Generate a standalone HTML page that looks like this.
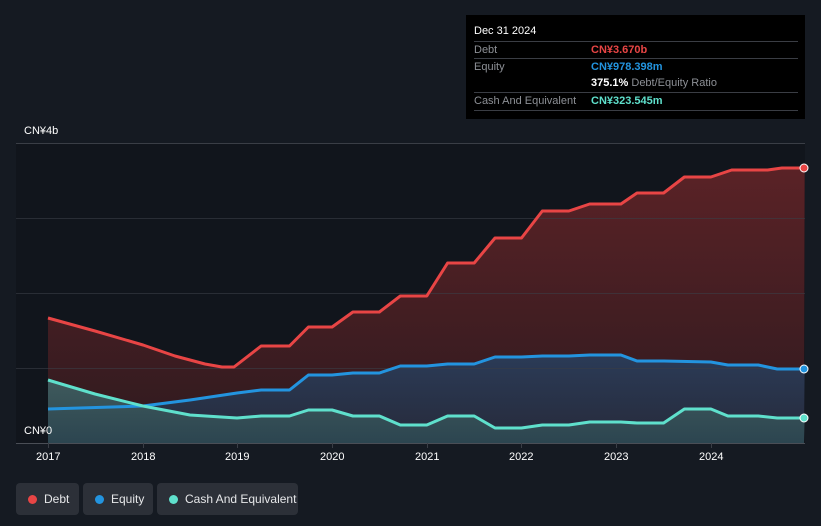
<!DOCTYPE html>
<html><head><meta charset="utf-8"><style>
html,body{margin:0;padding:0;background:#151a22;width:821px;height:526px;overflow:hidden;font-family:"Liberation Sans",sans-serif}
.tt{position:absolute;left:466px;top:15px;width:339px;height:104px;background:#000;color:#fff;font-size:11px}
.tt .h{position:absolute;left:8px;top:10px;font-size:11px}
.row{position:absolute;left:8px;width:324px;border-top:1px solid #3a3d44;height:17px;line-height:17px}
.row .l{position:absolute;left:0;color:#8d9096}
.row .v{position:absolute;left:117px;font-weight:bold}
.leg{position:absolute;top:483px;height:32px;background:#2c3038;border-radius:4px;color:#e6e7e9;font-size:12px;line-height:32px}
.leg i{position:absolute;top:12px;left:12px;width:9px;height:9px;border-radius:50%}
.leg span{position:absolute;left:28px}
.ax{position:absolute;color:#fff;font-size:11px}
</style></head><body>
<svg width="821" height="526" style="position:absolute;left:0;top:0">
<defs>
<linearGradient id="gd" x1="0" y1="0" x2="0" y2="1"><stop offset="0" stop-color="#5a2226"/><stop offset="1" stop-color="#2e1a1f"/></linearGradient>
<linearGradient id="ge" x1="0" y1="0" x2="0" y2="1"><stop offset="0" stop-color="#2b3b57"/><stop offset="1" stop-color="#262a3a"/></linearGradient>
<linearGradient id="gc" x1="0" y1="0" x2="0" y2="1"><stop offset="0" stop-color="#3f5a5c"/><stop offset="1" stop-color="#2c4550"/></linearGradient>
</defs>
<rect x="16" y="143" width="789" height="300" fill="#11151c"/>
<g id="areas"></g>
<g stroke="#3a3e46" stroke-width="1">
<line x1="16" y1="143.5" x2="805" y2="143.5"/><line x1="16" y1="218.5" x2="805" y2="218.5" stroke-opacity=".6"/><line x1="16" y1="293.5" x2="805" y2="293.5" stroke-opacity=".6"/><line x1="16" y1="368.5" x2="805" y2="368.5" stroke-opacity=".6"/><line x1="16" y1="443.5" x2="805" y2="443.5" stroke="#4a4e56"/>
<line x1="48.5" y1="443" x2="48.5" y2="448"/><line x1="143.5" y1="443" x2="143.5" y2="448"/><line x1="237.5" y1="443" x2="237.5" y2="448"/><line x1="332.5" y1="443" x2="332.5" y2="448"/><line x1="427.5" y1="443" x2="427.5" y2="448"/><line x1="521.5" y1="443" x2="521.5" y2="448"/><line x1="616.5" y1="443" x2="616.5" y2="448"/><line x1="711.5" y1="443" x2="711.5" y2="448"/>
</g>
<g id="lines"></g>
<circle cx="804" cy="168" r="4" fill="#e84545" stroke="#fff" stroke-width="1"/>
<circle cx="804" cy="369" r="4" fill="#2394df" stroke="#fff" stroke-width="1"/>
<circle cx="804" cy="418" r="4" fill="#5fe0cc" stroke="#fff" stroke-width="1"/>
</svg>
<script>
function X(t){return 48+(t-2017)*94.7}
function steps(start,arr){var p=start.slice();for(var i=0;i<arr.length;i++){var a=arr[i];p.push([X(a[0]),a[1]]);}return p;}
var debt=steps([[48,318],[95,331],[143,345],[175,356],[205,364],[222,367],[234,367]],[[2019.25,346],[2019.55,346],[2019.75,327],[2020,327],[2020.22,312],[2020.5,312],[2020.72,296],[2021,296],[2021.22,263],[2021.5,263],[2021.72,238],[2022,238],[2022.22,211],[2022.5,211],[2022.72,204],[2023.05,204],[2023.22,193],[2023.5,193],[2023.72,177],[2024,177],[2024.22,170],[2024.6,170],[2024.75,168],[2024.99,168]]);
var eq=steps([[48,409],[143,406],[190,400],[237,393]],[[2019.25,390],[2019.55,390],[2019.75,375],[2020,375],[2020.22,373],[2020.5,373],[2020.72,366],[2021,366],[2021.22,364],[2021.5,364],[2021.72,357],[2022,357],[2022.22,356],[2022.5,356],[2022.72,355],[2023.05,355],[2023.22,361],[2023.5,361],[2024,362],[2024.18,365],[2024.5,365],[2024.7,369],[2024.99,369]]);
var cash=steps([[48,380],[95,394],[143,406],[190,415],[237,418]],[[2019.25,416],[2019.55,416],[2019.75,410],[2020,410],[2020.22,416],[2020.5,416],[2020.72,425],[2021,425],[2021.22,416],[2021.5,416],[2021.72,428],[2022,428],[2022.22,425],[2022.5,425],[2022.72,422],[2023.05,422],[2023.22,423],[2023.5,423],[2023.72,409],[2024,409],[2024.18,416],[2024.5,416],[2024.7,418],[2024.99,418]]);
function d(p){return 'M'+p.map(function(q){return q[0].toFixed(1)+','+q[1]}).join('L');}
var A='',L='';
function add(p,fill,col){A+='<path d="'+d(p)+'L804,443L48,443Z" fill="'+fill+'"/>';L+='<path d="'+d(p)+'" fill="none" stroke="'+col+'" stroke-width="3" stroke-linejoin="round"/>';}
add(debt,'url(#gd)','#e84545');add(eq,'url(#ge)','#2394df');add(cash,'url(#gc)','#5fe0cc');
document.getElementById('areas').innerHTML=A;document.getElementById('lines').innerHTML=L;
</script>
<div class="ax" style="left:24px;top:125px">CN¥4b</div>
<div class="ax" style="left:24px;top:425px">CN¥0</div>
<div class="ax" style="left:36px;top:451px">2017</div>
<div class="ax" style="left:131px;top:451px">2018</div>
<div class="ax" style="left:225px;top:451px">2019</div>
<div class="ax" style="left:320px;top:451px">2020</div>
<div class="ax" style="left:415px;top:451px">2021</div>
<div class="ax" style="left:509px;top:451px">2022</div>
<div class="ax" style="left:604px;top:451px">2023</div>
<div class="ax" style="left:699px;top:451px">2024</div>
<div class="tt">
<div class="h">Dec 31 2024</div>
<div class="row" style="top:26px"><span class="l">Debt</span><span class="v" style="color:#e84545">CN¥3.670b</span></div>
<div class="row" style="top:43px"><span class="l">Equity</span><span class="v" style="color:#2394df">CN¥978.398m</span></div>
<div class="row" style="top:60px;border-top:none"><span class="v" style="color:#fff">375.1% <span style="font-weight:normal;color:#8d9096">Debt/Equity Ratio</span></span></div>
<div class="row" style="top:77px"><span class="l">Cash And Equivalent</span><span class="v" style="color:#5fe0cc">CN¥323.545m</span></div>
<div class="row" style="top:95px;height:0"></div>
</div>
<div class="leg" style="left:16px;width:63px"><i style="background:#e84545"></i><span>Debt</span></div>
<div class="leg" style="left:83px;width:70px"><i style="background:#2394df"></i><span>Equity</span></div>
<div class="leg" style="left:157px;width:141px"><i style="background:#5fe0cc"></i><span>Cash And Equivalent</span></div>
</body></html>
